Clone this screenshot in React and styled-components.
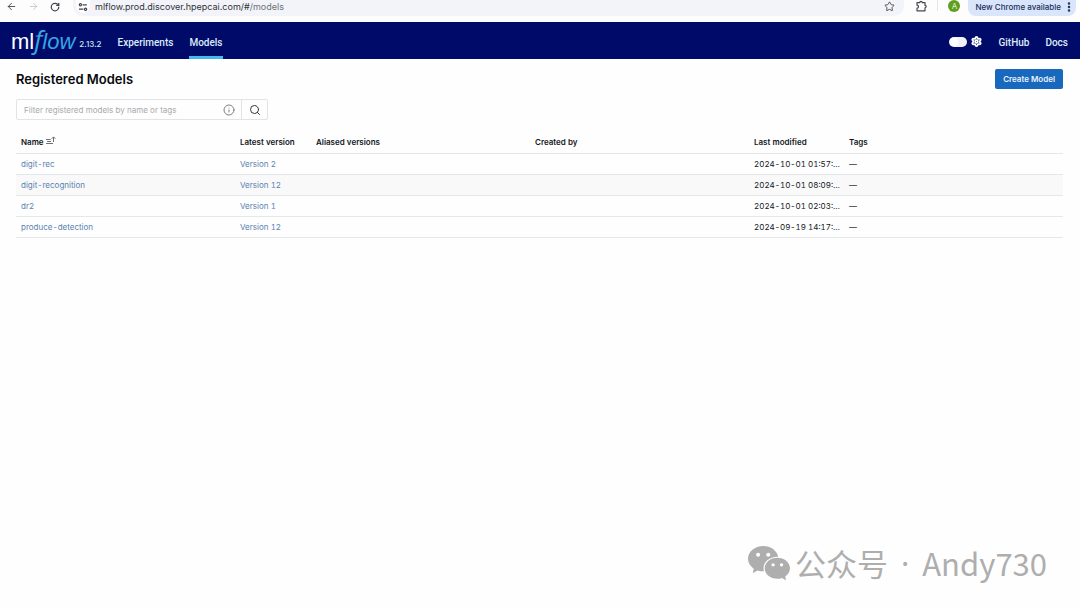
import styled, { createGlobalStyle } from 'styled-components';
import {
    ArrowLeft,
    ArrowRight,
    EllipsisVertical,
    Info,
    RotateCw,
    Search,
    Settings,
    Star,
} from 'lucide-react';
import { AiFillWechat } from 'react-icons/ai';

const models = [
    { name: 'digit-rec', version: 2, modified: '2024-10-01 01:57:12' },
    {
        name: 'digit-recognition',
        version: 12,
        modified: '2024-10-01 08:09:12',
        highlighted: true,
    },
    { name: 'dr2', version: 1, modified: '2024-10-01 02:03:12' },
    { name: 'produce-detection', version: 12, modified: '2024-09-19 14:17:12' },
];

function BrowserBar() {
    return (
        <Toolbar>
            <ToolButton aria-label="Back">
                <ArrowLeft size={11} />
            </ToolButton>
            <ToolButton aria-label="Forward" $muted>
                <ArrowRight size={11} />
            </ToolButton>
            <ToolButton aria-label="Reload">
                <RotateCw size={10} strokeWidth={3} />
            </ToolButton>
            <AddressBar>
                <SiteButton aria-label="Site information">
                    <TuneIcon />
                </SiteButton>
                <Address>
                    mlflow.prod.discover.hpepcai.com/#<span>/models</span>
                </Address>
                <ToolButton aria-label="Bookmark">
                    <Star size={11} />
                </ToolButton>
            </AddressBar>
            <ToolButton aria-label="Extensions">
                <PuzzleIcon />
            </ToolButton>
            <Separator />
            <Avatar aria-label="Profile">A</Avatar>
            <UpdateButton>
                New Chrome available
                <EllipsisVertical size={12} strokeWidth={3} />
            </UpdateButton>
        </Toolbar>
    );
}

function TuneIcon() {
    return (
        <svg width="10" height="10" viewBox="0 0 10 10" fill="none" stroke="currentColor" strokeWidth="1.2">
            <path d="M4.6 2.8h4.2M1 7.2h4.4" />
            <circle cx="2.4" cy="2.8" r="1.1" />
            <circle cx="7.6" cy="7.2" r="1.1" />
        </svg>
    );
}

function PuzzleIcon() {
    return (
        <svg width="13" height="13" viewBox="0 0 13 13" fill="none" stroke="currentColor" strokeWidth="1.2" strokeLinejoin="round">
            <path d="M2 2.6h2.8a1.2 1.2 0 0 1 2.4 0H10v2.8a1.2 1.2 0 0 1 0 2.4v3H2V8.2a1.5 1.5 0 0 0 0-3z" />
        </svg>
    );
}

function SortIcon() {
    return (
        <svg width="10" height="9" viewBox="0 0 10 9" fill="none" stroke="currentColor" strokeWidth="1">
            <path d="M0 3.5h4.5M1 5.5h4M0 7.5h7M7.5 6V1M5.6 2.8l1.9-1.9 1.9 1.9" />
        </svg>
    );
}

function AppHeader() {
    return (
        <Header>
            <Logo href="#/" aria-label="mlflow">
                ml
                <em>
                    <LogoInitial>f</LogoInitial>low
                </em>
            </Logo>
            <Release>2.13.2</Release>
            <Nav>
                <NavLink href="#/experiments">Experiments</NavLink>
                <NavLink href="#/models" $active>
                    Models
                </NavLink>
            </Nav>
            <ThemeSwitch>
                <input type="checkbox" role="switch" aria-label="Dark theme" />
                <Settings size={11} strokeWidth={4} />
            </ThemeSwitch>
            <Nav>
                <NavLink href="#github">GitHub</NavLink>
                <NavLink href="#docs">Docs</NavLink>
            </Nav>
        </Header>
    );
}

function ModelsTable() {
    return (
        <Table>
            <colgroup>
                <col />
                <Column $width={76} />
                <col />
                <col />
                <Column $width={95} />
                <col />
            </colgroup>
            <thead>
                <tr>
                    <HeadCell>
                        Name <SortIcon />
                    </HeadCell>
                    <HeadCell>Latest version</HeadCell>
                    <HeadCell>Aliased versions</HeadCell>
                    <HeadCell>Created by</HeadCell>
                    <HeadCell>Last modified</HeadCell>
                    <HeadCell>Tags</HeadCell>
                </tr>
            </thead>
            <tbody>
                {models.map(({ name, version, modified, highlighted }) => (
                    <Row key={name} $highlighted={highlighted}>
                        <Cell>
                            <CellLink href={`#/models/${name}`}>{name}</CellLink>
                        </Cell>
                        <Cell>
                            <CellLink href={`#/models/${name}/${version}`}>
                                Version {version}
                            </CellLink>
                        </Cell>
                        <Cell />
                        <Cell />
                        <Cell>{modified}</Cell>
                        <Cell>—</Cell>
                    </Row>
                ))}
            </tbody>
        </Table>
    );
}

export default function App() {
    return (
        <Page>
            <GlobalStyle />
            <BrowserBar />
            <AppHeader />
            <Main>
                <TitleRow>
                    <Title>Registered Models</Title>
                    <PrimaryButton>Create Model</PrimaryButton>
                </TitleRow>
                <SearchForm role="search" onSubmit={e => e.preventDefault()}>
                    <SearchField>
                        <input
                            type="text"
                            aria-label="Filter registered models"
                            placeholder="Filter registered models by name or tags"
                        />
                        <Info size={12} strokeWidth={2} />
                    </SearchField>
                    <SearchButton aria-label="Search">
                        <Search size={12} strokeWidth={2} />
                    </SearchButton>
                </SearchForm>
                <ModelsTable />
            </Main>
            <Watermark>
                <AiFillWechat size={48} />
                <span>公众号</span>
                <Dot>·</Dot>
                <span>Andy730</span>
            </Watermark>
        </Page>
    );
}

const GlobalStyle = createGlobalStyle`
    * {
        box-sizing: border-box;
    }

    body {
        margin: 0;
        background: #fefefe;
        color: #11171c;
        font-family: Inter, 'Liberation Sans', sans-serif;
        font-size: 8px;
    }

    button,
    input {
        font: inherit;
        color: inherit;
    }

    button {
        display: inline-flex;
        align-items: center;
        justify-content: center;
        padding: 0;
        border: 0;
        background: none;
    }

    a {
        text-decoration: none;
    }

    svg {
        flex: none;
    }
`;

const Page = styled.div`
    display: flex;
    flex-direction: column;
    min-height: 100vh;
`;

/* The top of the browser toolbar is cut off by the window edge */
const Toolbar = styled.div`
    display: flex;
    align-items: flex-start;
    height: 22px;
    padding: 0 4px;
    background: #fdfdfe;
    color: #45484d;
`;

const ToolButton = styled.button`
    width: 22px;
    height: 13px;
    color: ${({ $muted }) => ($muted ? '#c4c6ca' : 'inherit')};

    &&:first-child {
        width: 14px;
    }

    &:first-child + & {
        margin-left: 4px;
    }
`;

const AddressBar = styled.div`
    display: flex;
    flex: 1;
    height: 16px;
    margin: 0 6px 0 7px;
    padding: 0 4px 0 3px;
    border-radius: 0 0 10px 10px;
    background: #f2f4f9;
`;

const SiteButton = styled.button`
    width: 14px;
    height: 13px;
    border-radius: 0 0 7px 7px;
    && {
        background: #fff;
    }
`;

const Address = styled.span`
    flex: 1;
    padding-left: 5px;
    color: #303338;
    font-size: 9px;
    line-height: 13px;

    span {
        color: #6d7178;
    }
`;

const Separator = styled.span`
    width: 1px;
    height: 11px;
    margin: 0 10px 0 5px;
    background: #e1e4ea;
`;

const Avatar = styled.button`
    && {
        width: 12px;
        height: 12px;
        border-radius: 50%;
        background: #5f9e1f;
        color: #e6f3d8;
    }
`;

const UpdateButton = styled.button`
    && {
        height: 16px;
        gap: 2px;
        margin-left: 8px;
        padding: 0 1px 3px 7px;
        border-radius: 0 0 8px 8px;
        background: #d9e5fb;
        color: #1c2e5c;
        font-size: 8px;
        font-weight: 500;
    }
`;

const Header = styled.header`
    display: flex;
    align-items: center;
    height: 37px;
    padding: 0 12px 0 11px;
    background: #000b69;
    color: #fff;
`;

const Logo = styled.a`
    color: #fff;
    font-family: 'Liberation Sans', sans-serif;
    font-size: 22px;
    line-height: 34px;

    em {
        color: #38a5e3;
    }
`;

const LogoInitial = styled.span`
    font-family: 'Open Sans', sans-serif;
    font-size: 26px;
`;

const Release = styled.span`
    padding: 6px 0 0 4px;
    color: #c9e4f7;
    font-weight: 500;
`;

const Nav = styled.nav`
    display: flex;
    align-self: stretch;
    gap: 16px;
    margin-left: 16px;
`;

const NavLink = styled.a`
    display: flex;
    align-items: center;
    padding-top: 6px;
    border-bottom: 3px solid ${({ $active }) => ($active ? '#43b7ee' : 'transparent')};
    color: #dcebfb;
    font-family: Roboto, sans-serif;
    font-size: 10px;
    font-weight: 500;
`;

const ThemeSwitch = styled.label`
    display: flex;
    align-items: center;
    gap: 4px;
    margin-left: auto;
    padding-top: 2px;

    input {
        appearance: none;
        width: 18px;
        height: 10px;
        margin: 0;
        border-radius: 5px;
        background: radial-gradient(circle at 5px 5px, #fff 4px, #f1f1f6 5px);
    }
`;

const Main = styled.main`
    flex: 1;
    padding: 10px 17px 0 16px;
`;

const TitleRow = styled.div`
    display: flex;
    align-items: center;
    justify-content: space-between;
`;

const Title = styled.h1`
    margin: 0;
    color: #080a0c;
    font-size: 13px;
    font-weight: 600;
    line-height: 20px;
`;

const PrimaryButton = styled.button`
    && {
        height: 20px;
        padding: 0 8px;
        border-radius: 2px;
        background: #1868bd;
        color: #e9f2fc;
        font-weight: 600;
    }
`;

const SearchForm = styled.form`
    display: flex;
    height: 21px;
    width: 252px;
    margin-top: 10px;
    border: 1px solid #e2e3e5;
    border-radius: 2px;
`;

const SearchField = styled.div`
    display: flex;
    flex: 1;
    align-items: center;
    padding: 0 6px 0 7px;
    color: #7b7f84;

    input {
        flex: 1;
        min-width: 0;
        padding: 0;
        border: 0;
        outline: 0;
        background: none;
    }

    input::placeholder {
        color: #a6a9ad;
        opacity: 1;
    }
`;

const SearchButton = styled.button`
    && {
        width: 26px;
        border-left: 1px solid #e2e3e5;
        color: #33373b;
    }
`;

const Table = styled.table`
    width: 100%;
    margin-top: 11px;
    border-collapse: collapse;
    table-layout: fixed;
    font-variant-numeric: tabular-nums;
`;

const Column = styled.col`
    width: ${({ $width }) => $width}px;
`;

const Cell = styled.td`
    height: 21px;
    padding: 0 3px 0 5px;
    overflow: hidden;
    border-bottom: 1px solid #e6e7e8;
    text-align: left;
    text-overflow: ellipsis;
    white-space: nowrap;
`;

const HeadCell = styled(Cell).attrs({ as: 'th', scope: 'col' })`
    height: 22px;
    font-weight: 600;

    svg {
        color: #6b7075;
    }
`;

const Row = styled.tr`
    background: ${({ $highlighted }) => ($highlighted ? '#f9f9fa' : 'none')};
`;

const CellLink = styled.a`
    color: #5b83b0;
`;

const Watermark = styled.footer`
    display: flex;
    align-items: center;
    align-self: flex-end;
    gap: 2px;
    padding: 0 33px 20px 0;
    color: #aeaeae;
    font-family: 'Noto Sans CJK SC', sans-serif;
    font-size: 31px;
    line-height: 46px;
`;

const Dot = styled.span`
    padding: 0 11px;
    font-family: 'Noto Sans', sans-serif;
`;
